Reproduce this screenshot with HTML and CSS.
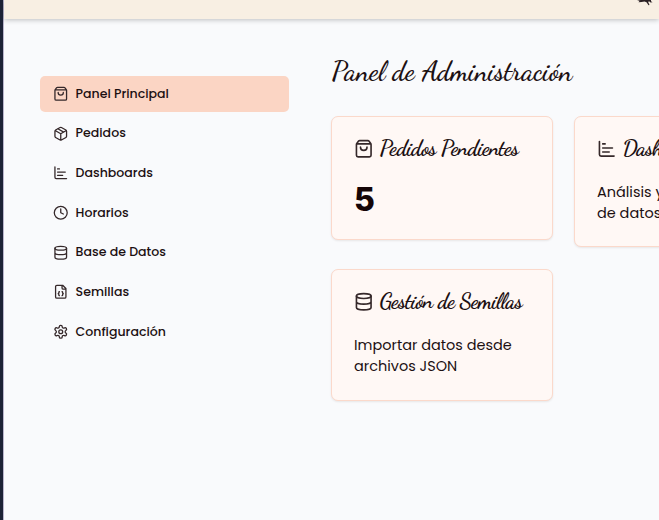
FILE: index.html
```html
<!DOCTYPE html>
<html lang="es">
<head>
<meta charset="utf-8">
<title>Panel de Administración</title>
<link rel="stylesheet" href="styles.css">
</head>
<body>
<svg class="defs" width="0" height="0">
  <symbol id="bag" viewBox="0 0 24 24"><path d="M3.1 6.03h17.8M3.4 5.467a2 2 0 0 0-.4 1.2V20a2 2 0 0 0 2 2h14a2 2 0 0 0 2-2V6.667a2 2 0 0 0-.4-1.2l-2-2.667A2 2 0 0 0 17 2H7a2 2 0 0 0-1.6.8zM16 10a4 4 0 0 1-8 0"/></symbol>
  <symbol id="box" viewBox="0 0 24 24"><path d="M11 21.73a2 2 0 0 0 2 0l7-4A2 2 0 0 0 21 16V8a2 2 0 0 0-1-1.73l-7-4a2 2 0 0 0-2 0l-7 4A2 2 0 0 0 3 8v8a2 2 0 0 0 1 1.73zM12 22V12M3.3 7 12 12l8.7-5M7.5 4.27l9 5.15"/></symbol>
  <symbol id="chart" viewBox="0 0 24 24"><path d="M3 3v16a2 2 0 0 0 2 2h16M7 11h12M7 16h8M7 6h3"/></symbol>
  <symbol id="clock" viewBox="0 0 24 24"><circle cx="12" cy="12" r="10"/><path d="M12 6v6l4 2"/></symbol>
  <symbol id="database" viewBox="0 0 24 24"><ellipse cx="12" cy="5" rx="9" ry="3"/><path d="M3 5v14a9 3 0 0 0 18 0V5M3 12a9 3 0 0 0 18 0"/></symbol>
  <symbol id="file" viewBox="0 0 24 24"><path d="M15 2H6a2 2 0 0 0-2 2v16a2 2 0 0 0 2 2h12a2 2 0 0 0 2-2V7zM14 2v4a2 2 0 0 0 2 2h4M10 12a1 1 0 0 0-1 1v1a1 1 0 0 1-1 1 1 1 0 0 1 1 1v1a1 1 0 0 0 1 1M14 18a1 1 0 0 0 1-1v-1a1 1 0 0 1 1-1 1 1 0 0 1-1-1v-1a1 1 0 0 0-1-1"/></symbol>
  <symbol id="gear" viewBox="0 0 24 24"><path d="M12.22 2h-.44a2 2 0 0 0-2 2v.18a2 2 0 0 1-1 1.73l-.43.25a2 2 0 0 1-2 0l-.15-.08a2 2 0 0 0-2.73.73l-.22.38a2 2 0 0 0 .73 2.73l.15.1a2 2 0 0 1 1 1.72v.51a2 2 0 0 1-1 1.74l-.15.09a2 2 0 0 0-.73 2.73l.22.38a2 2 0 0 0 2.73.73l.15-.08a2 2 0 0 1 2 0l.43.25a2 2 0 0 1 1 1.73V20a2 2 0 0 0 2 2h.44a2 2 0 0 0 2-2v-.18a2 2 0 0 1 1-1.73l.43-.25a2 2 0 0 1 2 0l.15.08a2 2 0 0 0 2.73-.73l.22-.39a2 2 0 0 0-.73-2.73l-.15-.08a2 2 0 0 1-1-1.74v-.5a2 2 0 0 1 1-1.74l.15-.09a2 2 0 0 0 .73-2.73l-.22-.38a2 2 0 0 0-2.73-.73l-.15.08a2 2 0 0 1-2 0l-.43-.25a2 2 0 0 1-1-1.73V4a2 2 0 0 0-2-2z"/><circle cx="12" cy="12" r="3"/></symbol>
</svg>
<div class="page">
  <header class="topbar">
    <svg class="emblem" viewBox="0 0 16 6"><path d="M0 .5 4 0h10v1.200l1.500 1-2 .2-1-.9-1.500.2 1.500 3.300-1 .3-2-3-2-.8-3 .6-3 .2 1-1.200z"/></svg>
  </header>
  <div class="layout">
    <nav class="sidebar">
      <a class="link active"><svg class="icon"><use href="#bag"/></svg><span>Panel Principal</span></a>
      <a class="link"><svg class="icon"><use href="#box"/></svg><span>Pedidos</span></a>
      <a class="link"><svg class="icon"><use href="#chart"/></svg><span>Dashboards</span></a>
      <a class="link"><svg class="icon"><use href="#clock"/></svg><span>Horarios</span></a>
      <a class="link"><svg class="icon"><use href="#database"/></svg><span>Base de Datos</span></a>
      <a class="link"><svg class="icon"><use href="#file"/></svg><span>Semillas</span></a>
      <a class="link"><svg class="icon"><use href="#gear"/></svg><span>Configuración</span></a>
    </nav>
    <main class="content">
      <h1>Panel de Administración</h1>
      <div class="cards">
        <section class="card">
          <h2><svg class="icon"><use href="#bag"/></svg><span>Pedidos Pendientes</span></h2>
          <p class="count">5</p>
        </section>
        <section class="card">
          <h2><svg class="icon"><use href="#chart"/></svg><span>Dashboards</span></h2>
          <p>Análisis y reportes<br>de datos</p>
        </section>
        <section class="card seeds">
          <h2><svg class="icon"><use href="#database"/></svg><span>Gestión de Semillas</span></h2>
          <p>Importar datos desde<br>archivos JSON</p>
        </section>
      </div>
    </main>
  </div>
</div>
</body>
</html>
```
FILE: styles.css
```css
* { box-sizing: border-box; }
body {
  margin: 0;
  height: 520px;
  overflow: hidden;
  background: #f9fafc;
  color: #1c1012;
  font-family: Poppins, Inter, sans-serif;
}
.defs { display: block; }
.page { height: 520px; border-left: 3px solid #1c2236; box-shadow: inset 1px 0 #b9b5cc; overflow: hidden; }
.topbar {
  height: 19px;
  margin-left: 1px;
  padding-left: 633px;
  background: #f8efe3;
  box-shadow: 0 1px 5px rgba(0, 0, 0, .24);
}
.emblem { display: block; width: 16px; height: 6px; fill: #2a2024; }
.layout { display: flex; padding-left: 36.600px; }
.sidebar { width: 249px; padding-top: 57px; flex: none; }
.link {
  display: flex;
  align-items: center;
  gap: 7px;
  height: 35.600px;
  margin-bottom: 4.060px;
  padding-left: 13.500px;
  border-radius: 5px;
  font-size: 12.550px;
  font-weight: 500;
  white-space: nowrap;
}
.active { background: #fbd5c4; }
.icon {
  width: 15.500px;
  height: 15.500px;
  flex: none;
  fill: none;
  stroke: #35282a;
  stroke-width: 2;
  stroke-linecap: round;
  stroke-linejoin: round;
}
.content { margin-left: 42.900px; padding-top: 34px; flex: none; width: 710px; }
h1, h2 { margin: 0; font-family: "Dancing Script", "Liberation Serif", cursive; white-space: nowrap; }
h1 { height: 63px; line-height: 37px; font-size: 27.300px; font-weight: 600; }
.cards { display: grid; grid-template-columns: 222px 222px; column-gap: 21px; row-gap: 22px; align-items: start; }
.card {
  height: 131px;
  padding: 20px 21.500px;
  background: #fff8f5;
  border: 1px solid #fbd9cb;
  border-radius: 7px;
  box-shadow: 0 1px 2px rgba(60, 30, 20, .09);
}
.card:first-child { height: 124px; }
.seeds { height: 132px; }
h2 { display: flex; align-items: center; gap: 6px; height: 24px; font-size: 21.800px; font-weight: 700; letter-spacing: -.03em; }
h2 .icon { width: 19.500px; height: 19.500px; }
h2 span { line-height: 22px; padding-bottom: 2px; }
.card p { margin: 20.500px 0 0; font-size: 14.480px; line-height: 21.300px; white-space: nowrap; }
.card .count { margin-top: 19px; font: 800 32px/40px Inter, sans-serif; color: #150507; }
```
